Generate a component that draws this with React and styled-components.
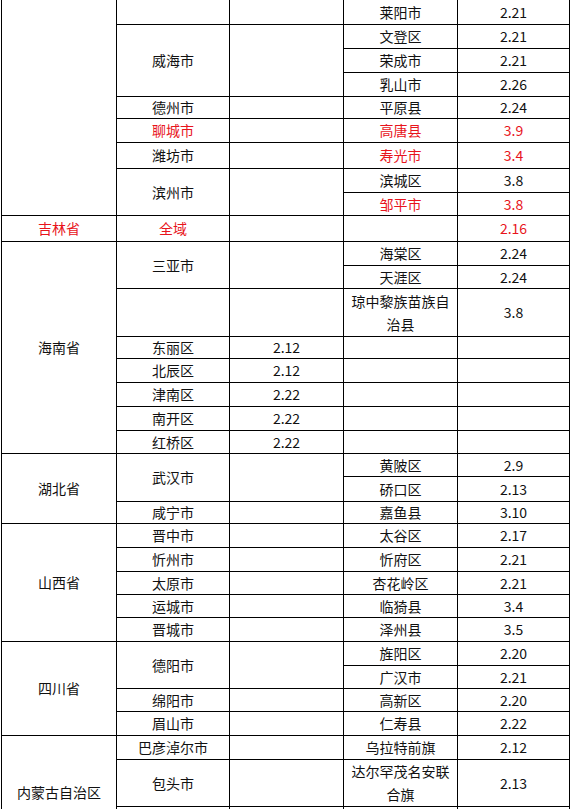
import React from "react";
import styled, { createGlobalStyle } from "styled-components";

const GlobalStyle = createGlobalStyle`
  html, body {
    margin: 0;
    padding: 0;
    background: #fff;
    overflow: hidden;
  }
`;

const Page = styled.div`
  padding-left: 1px;
`;

const Table = styled.table`
  border-collapse: separate;
  border-spacing: 0;
  table-layout: fixed;
  width: 568px;
  border-left: 1px solid #000;
  font-family: "Noto Sans CJK SC", "Microsoft YaHei", sans-serif;
  font-size: 14px;
  color: #111;
`;

const Row = styled.tr`
  height: ${(p) => p.$h}px;
`;

const Cell = styled.td`
  box-sizing: border-box;
  padding: 0 7px;
  border-right: 1px solid #000;
  border-bottom: 1px solid #000;
  text-align: center;
  vertical-align: middle;
  line-height: ${(p) => (p.$wrap ? 23 : 19)}px;
  color: ${(p) => (p.$red ? "#e8141c" : "inherit")};
`;

const widths = [115, 113, 114, 114, 112];

// [height, cells]; cell = text | { t, rs, red, wrap }
const rows = [
  [25, [{ t: "", rs: 9 }, "", "", "莱阳市", "2.21"]],
  [24, [{ t: "威海市", rs: 3 }, { t: "", rs: 3 }, "文登区", "2.21"]],
  [24, ["荣成市", "2.21"]],
  [24, ["乳山市", "2.26"]],
  [22, ["德州市", "", "平原县", "2.24"]],
  [24, [{ t: "聊城市", red: 1 }, "", { t: "高唐县", red: 1 }, { t: "3.9", red: 1 }]],
  [26, ["潍坊市", "", { t: "寿光市", red: 1 }, { t: "3.4", red: 1 }]],
  [24, [{ t: "滨州市", rs: 2 }, { t: "", rs: 2 }, "滨城区", "3.8"]],
  [23, [{ t: "邹平市", red: 1 }, { t: "3.8", red: 1 }]],
  [26, [{ t: "吉林省", red: 1 }, { t: "全域", red: 1 }, "", "", { t: "2.16", red: 1 }]],
  [24, [{ t: "海南省", rs: 8 }, { t: "三亚市", rs: 2 }, { t: "", rs: 2 }, "海棠区", "2.24"]],
  [23, ["天涯区", "2.24"]],
  [48, ["", "", { t: "琼中黎族苗族自治县", wrap: 1 }, "3.8"]],
  [22, ["东丽区", "2.12", "", ""]],
  [24, ["北辰区", "2.12", "", ""]],
  [24, ["津南区", "2.22", "", ""]],
  [24, ["南开区", "2.22", "", ""]],
  [23, ["红桥区", "2.22", "", ""]],
  [23, [{ t: "湖北省", rs: 3 }, { t: "武汉市", rs: 2 }, { t: "", rs: 2 }, "黄陂区", "2.9"]],
  [25, ["硚口区", "2.13"]],
  [22, ["咸宁市", "", "嘉鱼县", "3.10"]],
  [24, [{ t: "山西省", rs: 5 }, "晋中市", "", "太谷区", "2.17"]],
  [24, ["忻州市", "", "忻府区", "2.21"]],
  [23, ["太原市", "", "杏花岭区", "2.21"]],
  [23, ["运城市", "", "临猗县", "3.4"]],
  [24, ["晋城市", "", "泽州县", "3.5"]],
  [24, [{ t: "四川省", rs: 4 }, { t: "德阳市", rs: 2 }, { t: "", rs: 2 }, "旌阳区", "2.20"]],
  [23, ["广汉市", "2.21"]],
  [23, ["绵阳市", "", "高新区", "2.20"]],
  [24, ["眉山市", "", "仁寿县", "2.22"]],
  [24, [{ t: "内蒙古自治区", rs: 3 }, "巴彦淖尔市", "", "乌拉特前旗", "2.12"]],
  [47, ["包头市", "", { t: "达尔罕茂名安联合旗", wrap: 1 }, "2.13"]],
  [43, ["", "", "", ""]],
];

const App = () => {
  return (
    <Page>
      <GlobalStyle />
      <Table>
        <colgroup>
          {widths.map((w, i) => (
            <col key={i} style={{ width: w }} />
          ))}
        </colgroup>
        <tbody>
          {rows.map(([h, cells], r) => (
            <Row key={r} $h={h}>
              {cells.map((c, i) => {
                const cell = typeof c === "string" ? { t: c } : c;
                return (
                  <Cell key={i} rowSpan={cell.rs} $red={cell.red} $wrap={cell.wrap}>
                    {cell.t}
                  </Cell>
                );
              })}
            </Row>
          ))}
        </tbody>
      </Table>
    </Page>
  );
};

export default App;
